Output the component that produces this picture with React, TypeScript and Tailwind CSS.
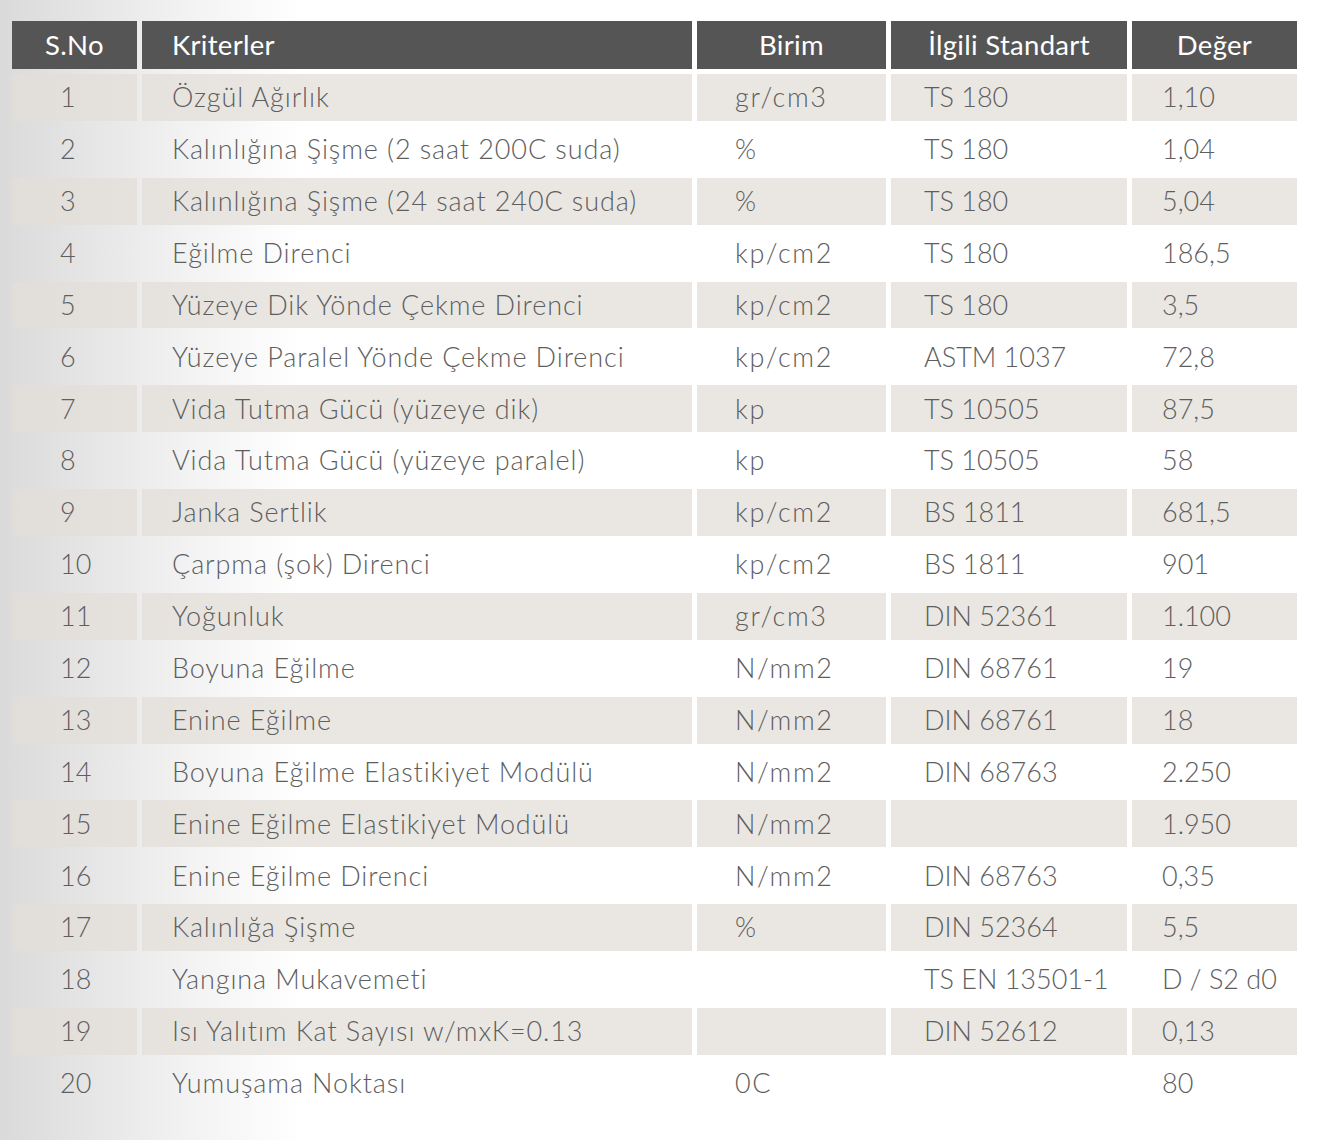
const ROWS: [string, string, string, string, string][] = [
  ['1', 'Özgül Ağırlık', 'gr/cm3', 'TS 180', '1,10'],
  ['2', 'Kalınlığına Şişme (2 saat 200C suda)', '%', 'TS 180', '1,04'],
  ['3', 'Kalınlığına Şişme (24 saat 240C suda)', '%', 'TS 180', '5,04'],
  ['4', 'Eğilme Direnci', 'kp/cm2', 'TS 180', '186,5'],
  ['5', 'Yüzeye Dik Yönde Çekme Direnci', 'kp/cm2', 'TS 180', '3,5'],
  ['6', 'Yüzeye Paralel Yönde Çekme Direnci', 'kp/cm2', 'ASTM 1037', '72,8'],
  ['7', 'Vida Tutma Gücü (yüzeye dik)', 'kp', 'TS 10505', '87,5'],
  ['8', 'Vida Tutma Gücü (yüzeye paralel)', 'kp', 'TS 10505', '58'],
  ['9', 'Janka Sertlik', 'kp/cm2', 'BS 1811', '681,5'],
  ['10', 'Çarpma (şok) Direnci', 'kp/cm2', 'BS 1811', '901'],
  ['11', 'Yoğunluk', 'gr/cm3', 'DIN 52361', '1.100'],
  ['12', 'Boyuna Eğilme', 'N/mm2', 'DIN 68761', '19'],
  ['13', 'Enine Eğilme', 'N/mm2', 'DIN 68761', '18'],
  ['14', 'Boyuna Eğilme Elastikiyet Modülü', 'N/mm2', 'DIN 68763', '2.250'],
  ['15', 'Enine Eğilme Elastikiyet Modülü', 'N/mm2', '', '1.950'],
  ['16', 'Enine Eğilme Direnci', 'N/mm2', 'DIN 68763', '0,35'],
  ['17', 'Kalınlığa Şişme', '%', 'DIN 52364', '5,5'],
  ['18', 'Yangına Mukavemeti', '', 'TS EN 13501-1', 'D / S2 d0'],
  ['19', 'Isı Yalıtım Kat Sayısı w/mxK=0.13', '', 'DIN 52612', '0,13'],
  ['20', 'Yumuşama Noktası', '0C', '', '80'],
];

const GRID = 'grid grid-cols-[125px_550px_189px_236px_165px] gap-x-[5px]';

function HeaderCell({ children, left }: { children: string; left?: boolean }) {
  return (
    <div
      className={`h-[48px] bg-[#555555] text-white text-[27.5px] tracking-[0.3px] flex items-center ${
        left ? 'pl-[30px]' : 'justify-center'
      }`}
    >
      {children}
    </div>
  );
}

export default function App() {
  return (
    <div
      className="w-[1321px] h-[1140px] bg-[linear-gradient(to_right,#dadada_0%,#f2f2f2_14%,#ffffff_23%,#ffffff_100%)] pt-[21px] pl-[12px] text-[#5e5e5e]"
      style={{ fontFamily: 'Lato, "Open Sans", sans-serif' }}
    >
      <div className={`${GRID} mb-[5px]`}>
        <HeaderCell>S.No</HeaderCell>
        <HeaderCell left>Kriterler</HeaderCell>
        <HeaderCell>Birim</HeaderCell>
        <HeaderCell>İlgili Standart</HeaderCell>
        <HeaderCell>Değer</HeaderCell>
      </div>

      <div className="flex flex-col gap-y-[5px]">
        {ROWS.map((row, i) => {
          const shade = i % 2 === 0 ? 'bg-[#e3dfd9]/75' : '';
          return (
            <div key={row[0]} className={`${GRID} h-[46.9px] text-[27px] font-light`}>
              <div className={`${shade} flex items-center pl-[48px]`}>{row[0]}</div>
              <div className={`${shade} flex items-center pl-[30px] tracking-[0.9px]`}>{row[1]}</div>
              <div className={`${shade} flex items-center pl-[38px] tracking-[1.6px]`}>{row[2]}</div>
              <div className={`${shade} flex items-center pl-[33px]`}>{row[3]}</div>
              <div className={`${shade} flex items-center pl-[30px]`}>{row[4]}</div>
            </div>
          );
        })}
      </div>
    </div>
  );
}
